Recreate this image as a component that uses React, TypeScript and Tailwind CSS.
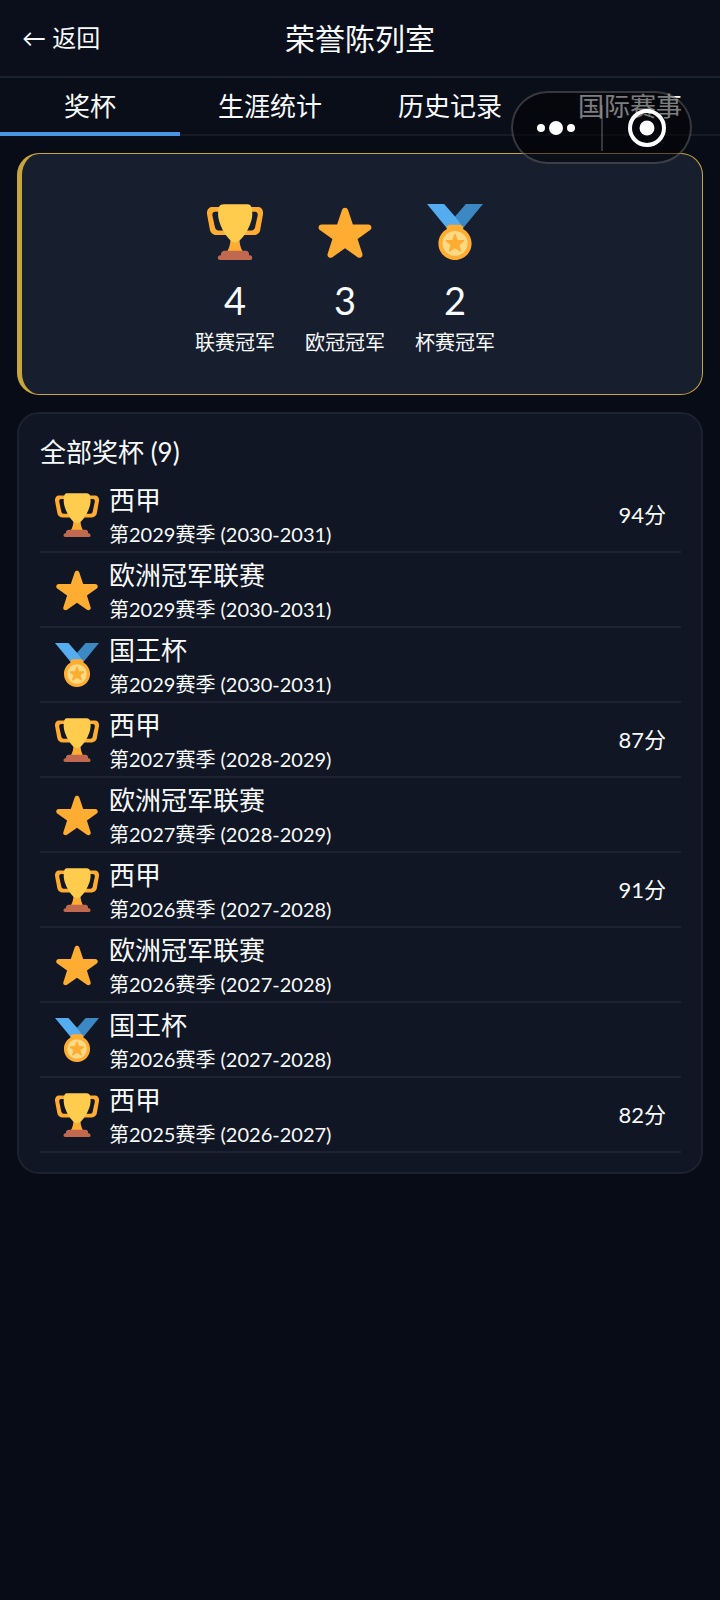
import React, { useState } from 'react'

type TrophyKind = 'league' | 'champions' | 'cup'

interface Trophy {
    id: string;
    kind: TrophyKind;
    name: string;
    season: string;
    points?: number;
}

const tabs = ['奖杯', '生涯统计', '历史记录', '国际赛事']

const summary: { kind: TrophyKind; count: number; label: string }[] = [
    { kind: 'league', count: 4, label: '联赛冠军' },
    { kind: 'champions', count: 3, label: '欧冠冠军' },
    { kind: 'cup', count: 2, label: '杯赛冠军' },
]

const trophies: Trophy[] = [
    { id: '1', kind: 'league', name: '西甲', season: '第2029赛季 (2030-2031)', points: 94 },
    { id: '2', kind: 'champions', name: '欧洲冠军联赛', season: '第2029赛季 (2030-2031)' },
    { id: '3', kind: 'cup', name: '国王杯', season: '第2029赛季 (2030-2031)' },
    { id: '4', kind: 'league', name: '西甲', season: '第2027赛季 (2028-2029)', points: 87 },
    { id: '5', kind: 'champions', name: '欧洲冠军联赛', season: '第2027赛季 (2028-2029)' },
    { id: '6', kind: 'league', name: '西甲', season: '第2026赛季 (2027-2028)', points: 91 },
    { id: '7', kind: 'champions', name: '欧洲冠军联赛', season: '第2026赛季 (2027-2028)' },
    { id: '8', kind: 'cup', name: '国王杯', season: '第2026赛季 (2027-2028)' },
    { id: '9', kind: 'league', name: '西甲', season: '第2025赛季 (2026-2027)', points: 82 },
]

function TrophyIcon({ kind, className }: { kind: TrophyKind; className: string }) {
    if (kind === 'league') {
        return (
            <svg viewBox="0 0 36 36" className={className} aria-hidden="true">
                <path fill="#FFAC33" d="M5.123 5h6C12.227 5 13 4.896 13 6V4c0-1.104-.773-2-1.877-2h-8c-2 0-3.583 2.125-3 5 0 0 1.791 9.375 1.917 9.958C2.373 18.5 4.164 20 6.081 20h6.958c1.105 0-.039-1.896-.039-3v-2c0 1.104-.773 2-1.877 2h-4c-1.104 0-1.833-1.042-2-2S3.539 7.667 3.539 7.667C3.206 5.75 4.018 5 5.123 5zm25.812 0h-6C23.831 5 22 4.896 22 6V4c0-1.104 1.831-2 2.935-2h8c2 0 3.584 2.125 3 5 0 0-1.633 9.419-1.771 10-.354 1.5-2.042 3-4 3h-7.146C21.914 20 22 18.104 22 17v-2c0 1.104 1.831 2 2.935 2h4c1.104 0 1.834-1.042 2-2s1.584-7.333 1.584-7.333C32.851 5.75 32.04 5 30.935 5zM20.832 22c0-6.958-2.709 0-2.709 0s-3-6.958-3 0-3.291 10-3.291 10h12.292c-.001 0-3.292-3.042-3.292-10z" />
                <path fill="#FFCC4D" d="M29.123 6.577c0 6.775-6.77 18.192-11 18.192-4.231 0-11-11.417-11-18.192 0-5.195 1-6.319 3-6.319 1.374 0 6.025-.027 8-.027l7-.001c2.917-.001 4 .684 4 6.347z" />
                <path fill="#C1694F" d="M27 33c0 1.104.227 2-.877 2h-16C9.018 35 9 34.104 9 33v-1c0-1.104 1.164-2 2.206-2h13.917c1.042 0 1.877.896 1.877 2v1z" />
                <path fill="#C1694F" d="M29 34.625c0 .76.165 1.375-1.252 1.375H8.498C7.206 36 7 35.385 7 34.625v-.25C7 33.615 7.738 33 8.498 33h19.25c.759 0 1.252.615 1.252 1.375v.25z" />
            </svg>
        )
    }
    if (kind === 'champions') {
        return (
            <svg viewBox="0 0 36 36" className={className} aria-hidden="true">
                <path fill="#FFAC33" d="M27.287 34.627c-.404 0-.806-.124-1.152-.371L18 28.422l-8.135 5.834c-.343.247-.745.37-1.147.37-.405 0-.81-.125-1.157-.377-.697-.505-.99-1.403-.725-2.222l3.063-9.488-8.072-5.775c-.697-.506-.99-1.404-.724-2.22.268-.818 1.029-1.373 1.89-1.377l9.947-.015 3.165-9.44c.27-.817 1.033-1.369 1.893-1.369.86 0 1.624.553 1.895 1.369l3.165 9.44 9.937.015c.862.004 1.625.559 1.893 1.377.266.816-.026 1.714-.725 2.22l-8.072 5.775 3.063 9.488c.264.82-.028 1.718-.728 2.223-.345.251-.751.377-1.158.377z" />
            </svg>
        )
    }
    return (
        <svg viewBox="0 0 36 36" className={className} aria-hidden="true">
            <path fill="#55ACEE" d="M18 8l-7-8H0l14 17 11.521-4.75z" />
            <path fill="#3B88C3" d="M25 0l-7 8 5.39 7.312 1.227-1.489L36 0z" />
            <path fill="#FFAC33" d="M23.205 16.026c.08-.217.131-.448.131-.693 0-1.104-.896-2-2-2h-6.667c-1.104 0-2 .896-2 2 0 .245.05.476.131.693-3.258 1.826-5.464 5.307-5.464 9.307C7.335 31.224 12.111 36 18.002 36c5.892 0 10.667-4.776 10.667-10.667 0-4-2.206-7.481-5.464-9.307z" />
            <circle fill="#FFD983" cx="18" cy="25.333" r="8" />
            <path
                fill="#FFAC33"
                stroke="#FFAC33"
                strokeWidth="1"
                strokeLinejoin="round"
                d="M18 19.7l1.4 3.9 4.1.1-3.2 2.5 1.2 4-3.5-2.4-3.5 2.4 1.2-4-3.2-2.5 4.1-.1z"
            />
        </svg>
    )
}

function CapsuleMenu() {
    return (
        <div className="absolute right-7 top-[91px] flex h-[73px] w-[181px] items-center rounded-full border-2 border-white/20 bg-black/50">
            <button type="button" aria-label="更多" className="flex h-full flex-1 items-center justify-center pr-0.5">
                <svg viewBox="0 0 40 16" className="h-4 w-10" fill="#fff">
                    <circle cx="5" cy="8" r="4" />
                    <circle cx="20" cy="8" r="7" />
                    <circle cx="35" cy="8" r="4" />
                </svg>
            </button>
            <span className="h-[46px] w-0.5 bg-white/20" />
            <button type="button" aria-label="关闭" className="flex h-full flex-1 items-center justify-center pl-0.5">
                <svg viewBox="0 0 38 38" className="h-[38px] w-[38px]">
                    <circle cx="19" cy="19" r="17" fill="none" stroke="#fff" strokeWidth="4" />
                    <circle cx="19" cy="19" r="7.5" fill="#fff" />
                </svg>
            </button>
        </div>
    )
}

export default function App() {
    const [active, setActive] = useState(0)

    return (
        <div className="relative min-h-screen bg-[#080c16] font-['Lato','Noto_Sans_CJK_SC',sans-serif] text-[#f8fafc]">
            <header className="grid h-[78px] grid-cols-[1fr_auto_1fr] items-center border-b-2 border-[#1c2130] bg-[#0b0f1b] px-[22px]">
                <button type="button" className="justify-self-start text-2xl">← 返回</button>
                <h1 className="text-3xl">荣誉陈列室</h1>
            </header>

            <nav className="grid h-[58px] grid-cols-4 border-b-2 border-[#161b27] bg-[#0a0e19]">
                {tabs.map((tab, i) => (
                    <button
                        key={tab}
                        type="button"
                        onClick={() => setActive(i)}
                        className={`-mb-0.5 border-b-4 pt-0.5 text-[26px] leading-[52px] ${i === active ? 'border-[#4a94e4]' : 'border-transparent'}`}
                    >
                        {tab}
                    </button>
                ))}
            </nav>
            <CapsuleMenu />

            <main className="flex flex-col gap-[17px] px-[17px] pt-[17px]">
                <section className="flex justify-center rounded-[22px] border border-l-[5px] border-[#c9a63c] bg-[#171e2e] pt-[50px] pr-1 pb-9">
                    {summary.map((item) => (
                        <div key={item.kind} className="mr-[30px] flex flex-col items-center">
                            <TrophyIcon kind={item.kind} className="h-14 w-14" />
                            <span className="mt-4 text-[38px] leading-[48px]">{item.count}</span>
                            <span className="mt-0.5 text-xl leading-8">{item.label}</span>
                        </div>
                    ))}
                </section>

                <section className="rounded-[22px] border-2 border-[#1c2230] bg-[#101623] pt-5 pr-5 pb-[19px] pl-[21px]">
                    <h2 className="mb-2 text-[26px] leading-9">全部奖杯 (9)</h2>
                    <ul>
                        {trophies.map((t) => (
                            <li key={t.id} className="flex items-center border-b-2 border-[#1c2230] px-[15px]">
                                <TrophyIcon kind={t.kind} className="h-11 w-11" />
                                <div className="ml-2.5 flex-1 py-0.5">
                                    <p className="text-[26px] leading-10">{t.name}</p>
                                    <p className="text-xl leading-[29px]">{t.season}</p>
                                </div>
                                {t.points && <span className="text-[22px]">{t.points}分</span>}
                            </li>
                        ))}
                    </ul>
                </section>
            </main>
        </div>
    )
}
